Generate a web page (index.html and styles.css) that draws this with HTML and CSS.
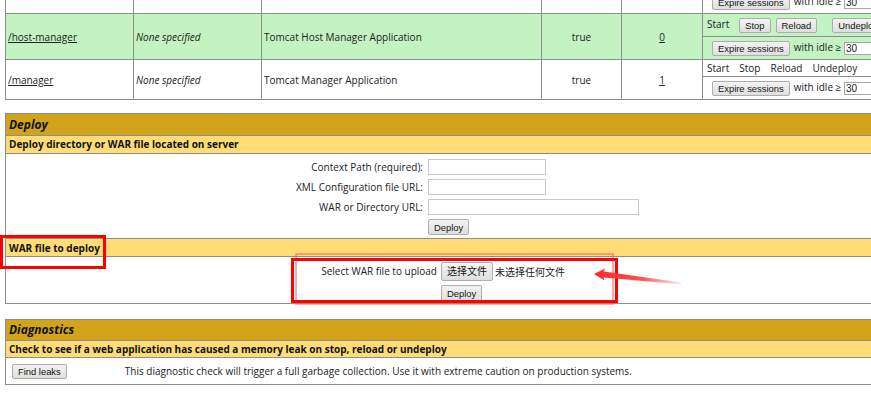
FILE: index.html
```html
<!DOCTYPE html>
<html>
<head>
<meta charset="utf-8">
<title>Tomcat Web Application Manager</title>
<link rel="stylesheet" href="styles.css">
</head>
<body>
<div class="page">
  <table class="apps">
    <colgroup>
      <col class="c-path"><col class="c-ver"><col class="c-name"><col class="c-run"><col class="c-sess"><col class="c-cmd">
    </colgroup>
    <tbody>
      <tr class="tall">
        <td rowspan="2"></td>
        <td rowspan="2"></td>
        <td rowspan="2"></td>
        <td rowspan="2" class="center"></td>
        <td rowspan="2" class="center"></td>
        <td class="cmd"></td>
      </tr>
      <tr class="tall">
        <td class="cmd"><button class="btn ml5">Expire sessions</button><span class="ml4">with idle ≥</span> <input class="idle" value="30"></td>
      </tr>

      <tr class="tall hl">
        <td rowspan="2"><a class="lnk" href="#">/host-manager</a></td>
        <td rowspan="2"><i>None specified</i></td>
        <td rowspan="2">Tomcat Host Manager Application</td>
        <td rowspan="2" class="center">true</td>
        <td rowspan="2" class="center"><a class="lnk" href="#">0</a></td>
        <td class="cmd">Start<button class="btn ml10">Stop</button><button class="btn ml5">Reload</button><button class="btn ml15">Undeploy</button></td>
      </tr>
      <tr class="tall hl">
        <td class="cmd"><button class="btn ml5">Expire sessions</button><span class="ml4">with idle ≥</span> <input class="idle" value="30"></td>
      </tr>

      <tr class="short">
        <td rowspan="2"><a class="lnk" href="#">/manager</a></td>
        <td rowspan="2"><i>None specified</i></td>
        <td rowspan="2">Tomcat Manager Application</td>
        <td rowspan="2" class="center">true</td>
        <td rowspan="2" class="center"><a class="lnk" href="#">1</a></td>
        <td class="cmd">Start<span class="ml10">Stop</span><span class="ml10">Reload</span><span class="ml10">Undeploy</span></td>
      </tr>
      <tr class="tall">
        <td class="cmd"><button class="btn ml5">Expire sessions</button><span class="ml4">with idle ≥</span> <input class="idle" value="30"></td>
      </tr>
    </tbody>
  </table>

  <div class="box deploy">
    <div class="title">Deploy</div>
    <div class="hdr">Deploy directory or WAR file located on server</div>
    <div class="body body-server">
      <div class="form-server">
        <label class="lbl">Context Path (required):</label><input class="txt w-short">
        <label class="lbl">XML Configuration file URL:</label><input class="txt w-short">
        <label class="lbl">WAR or Directory URL:</label><input class="txt w-long">
        <span></span><button class="btn btn-form">Deploy</button>
      </div>
    </div>
    <div class="hdr hdr-war">WAR file to deploy</div>
    <div class="body body-war">
      <div class="form-war">
        <label class="lbl">Select WAR file to upload</label>
        <div class="file"><button class="btn btn-file">选择文件</button><span class="nofile">未选择任何文件</span></div>
        <span></span><button class="btn btn-war">Deploy</button>
      </div>
    </div>
  </div>

  <div class="box diag">
    <div class="title title-diag">Diagnostics</div>
    <div class="hdr hdr-diag">Check to see if a web application has caused a memory leak on stop, reload or undeploy</div>
    <div class="body body-diag">
      <button class="btn btn-leaks">Find leaks</button>
      <span class="diag-text">This diagnostic check will trigger a full garbage collection. Use it with extreme caution on production systems.</span>
    </div>
  </div>
</div>

<div class="mark mark-war"></div>
<div class="mark mark-thin"></div>
<div class="mark mark-upload"></div>
<svg class="arrow" width="871" height="393" viewBox="0 0 871 393">
  <defs>
    <linearGradient id="ag" x1="594" y1="0" x2="682" y2="0" gradientUnits="userSpaceOnUse">
      <stop offset="0" stop-color="#ff2a2a"/>
      <stop offset="0.55" stop-color="#ff3c3c" stop-opacity="0.9"/>
      <stop offset="1" stop-color="#ff6060" stop-opacity="0.15"/>
    </linearGradient>
  </defs>
  <polygon points="594,274 605,268.5 604,271.6 681,282.6 681,284.2 603.5,277.6 604.5,280.5" fill="url(#ag)"/>
</svg>
</body>
</html>
```

FILE: styles.css
```css
* { box-sizing: border-box; }

html, body { margin: 0; padding: 0; }

body {
  width: 871px;
  height: 393px;
  overflow: hidden;
  position: relative;
  background: #fff;
  color: #222;
  font-family: "Open Sans", "Noto Sans CJK SC", sans-serif;
  font-size: 10px;
}

.page {
  width: 935px;
  padding-left: 5px;
}

/* ---------- application list ---------- */
.apps {
  width: 920px;
  table-layout: fixed;
  border-collapse: collapse;
  margin-top: -33px;
}
.c-path { width: 128px; }
.c-ver  { width: 128px; }
.c-name { width: 280px; }
.c-run  { width: 80px; }
.c-sess { width: 81px; }
.c-cmd  { width: 223px; }

.apps td {
  border: 1px solid #8e8e8e;
  padding: 1px 0 0 2px;
  line-height: 13px;
  white-space: nowrap;
  overflow: hidden;
  vertical-align: middle;
}
.apps tr.tall { height: 23px; }
.apps tr.short { height: 17px; }
.apps tr.hl td { background: #c3f3c3; }
.apps td.center { text-align: center; padding: 1px 0 0 0; }
.apps td.cmd { padding: 0 0 0 4px; }

.lnk { color: #222; text-decoration: underline; }

.ml4 { margin-left: 4px; }
.ml5 { margin-left: 5px; }
.ml10 { margin-left: 10px; }
.ml15 { margin-left: 15px; }

.btn {
  font-family: "Liberation Sans", Arial, sans-serif;
  font-size: 9.4px;
  height: 15px;
  line-height: 13px;
  padding: 0 5px;
  margin-top: 0;
  margin-bottom: 0;
  border: 1px solid #adadad;
  border-radius: 2px;
  background: linear-gradient(#f3f3f3, #dedede);
  color: #151515;
  vertical-align: middle;
}

.idle {
  width: 40px;
  height: 13px;
  padding: 0 1px;
  border: 1px solid #a5a5a5;
  font-family: "Liberation Sans", Arial, sans-serif;
  font-size: 10px;
  color: #222;
  vertical-align: middle;
}

/* ---------- boxes ---------- */
.box {
  width: 920px;
  border: 1px solid #8e8e8e;
  display: flex;
  flex-direction: column;
}
.deploy { margin-top: 13px; }
.diag { margin-top: 15px; }

.title {
  height: 22px;
  line-height: 21px;
  padding-left: 3px;
  background: #d2a41c;
  color: #111;
  font-size: 12px;
  font-weight: bold;
  font-style: italic;
  border-bottom: 1px solid #8e8e8e;
}
.title-diag { height: 21px; line-height: 20px; }

.hdr {
  height: 18px;
  line-height: 17px;
  padding-left: 3px;
  background: #ffdc75;
  color: #111;
  font-weight: bold;
  border-bottom: 1px solid #8e8e8e;
}
.hdr-war { height: 19px; line-height: 18px; border-top: 1px solid #8e8e8e; }
.hdr-diag { height: 17px; line-height: 16px; }

.body { background: #fff; }

.body-server {
  height: 84px;
  padding-top: 5px;
}
.form-server {
  display: grid;
  grid-template-columns: 417px auto;
  column-gap: 5px;
  row-gap: 4px;
  justify-items: start;
}
.lbl {
  justify-self: end;
  line-height: 16px;
  white-space: nowrap;
}
.txt {
  height: 16px;
  border: 1px solid #c9c9c9;
  background: #fff;
  padding: 0 2px;
}
.w-short { width: 118px; }
.w-long { width: 211px; }
.btn-form { height: 16px; }

.body-war {
  height: 46px;
  padding-top: 4px;
}
.form-war {
  display: grid;
  grid-template-columns: 431px auto;
  column-gap: 4px;
  row-gap: 4px;
  justify-items: start;
  align-items: center;
}
.form-war .lbl { line-height: 19px; padding-top: 1px; }
.file { display: flex; align-items: center; }
.btn-file {
  height: 19px;
  font-family: "Noto Sans CJK SC", sans-serif;
  font-size: 10px;
  line-height: 16px;
}
.nofile {
  margin-left: 2px;
  font-family: "Noto Sans CJK SC", sans-serif;
  font-size: 10px;
}
.btn-war { height: 17px; }

.body-diag {
  height: 26px;
  display: flex;
  align-items: center;
  padding-left: 6px;
}
.btn-leaks { height: 15px; }
.diag-text { margin-left: 58px; white-space: nowrap; }

/* ---------- annotations ---------- */
.mark {
  position: absolute;
  pointer-events: none;
}
.mark-war {
  left: 0;
  top: 235px;
  width: 106px;
  height: 34px;
  border: 3px solid #ff0000;
}
.mark-thin {
  left: 295px;
  top: 253px;
  width: 319px;
  height: 52px;
  border: 2px solid rgba(240, 90, 90, 0.5);
}
.mark-upload {
  left: 291px;
  top: 258px;
  width: 327px;
  height: 45px;
  border: 3px solid #ff0000;
}
.arrow {
  position: absolute;
  left: 0;
  top: 0;
  pointer-events: none;
}
```
